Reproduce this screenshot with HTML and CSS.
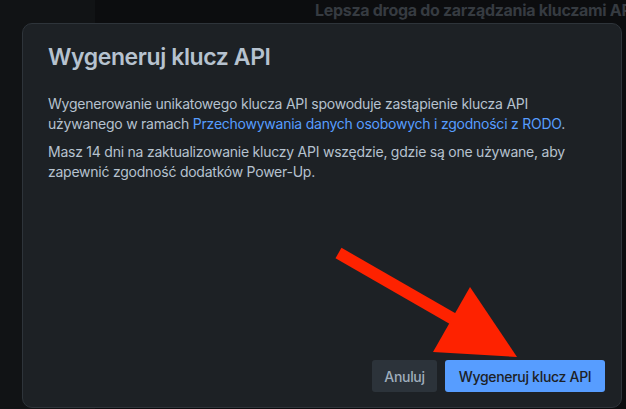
FILE: index.html
```html
<!DOCTYPE html>
<html lang="pl">
<head>
<meta charset="utf-8">
<link rel="stylesheet" href="styles.css">
</head>
<body>
<div class="page">
  <aside class="sidebar"></aside>
  <main class="main">
    <h2 class="bg-heading">Lepsza droga do zarządzania kluczami API</h2>
  </main>
</div>

<section class="modal">
  <h1 class="modal-title">Wygeneruj klucz API</h1>
  <div class="modal-body">
    <p>Wygenerowanie unikatowego klucza API spowoduje zastąpienie klucza API używanego w ramach <a href="#" class="link">Przechowywania danych osobowych i zgodności z RODO</a>.</p>
    <p>Masz 14 dni na zaktualizowanie kluczy API wszędzie, gdzie są one używane, aby zapewnić zgodność dodatków Power-Up.</p>
  </div>
  <div class="modal-footer">
    <button class="btn btn-subtle">Anuluj</button>
    <button class="btn btn-primary">Wygeneruj klucz API</button>
  </div>
</section>

<svg class="arrow" width="626" height="409" viewBox="0 0 626 409">
  <line x1="338.5" y1="253" x2="462" y2="324" stroke="#fe2200" stroke-width="12"/>
  <polygon points="470,287 433,352 517,357" fill="#fe2200"/>
</svg>
</body>
</html>
```
FILE: styles.css
```css
html, body {
  margin: 0;
  padding: 0;
  width: 626px;
  height: 409px;
  overflow: hidden;
  background: #0c0d0f;
  font-family: Inter, "Noto Sans", sans-serif;
}

.page {
  display: flex;
  height: 409px;
}

.sidebar {
  width: 95px;
  flex: none;
  background: #111315;
}

.main {
  flex: 1;
  padding-left: 220px;
  overflow: hidden;
}

.bg-heading {
  margin: 0;
  font-size: 16px;
  line-height: 20px;
  font-weight: 700;
  letter-spacing: -0.3px;
  color: #363b41;
  white-space: nowrap;
}

.modal {
  position: absolute;
  left: 22px;
  top: 23px;
  width: 600px;
  height: 385px;
  box-sizing: border-box;
  border: 1px solid #2e343a;
  border-radius: 10px;
  background: #1d2125;
  display: flex;
  flex-direction: column;
  padding: 18px 16px 15px 25px;
  color: #b6c2cf;
}

.modal-title {
  margin: 0;
  font-size: 23px;
  line-height: 30px;
  font-weight: 600;
  letter-spacing: -0.4px;
  color: #b6c2cf;
}

.modal-body {
  margin-top: 22px;
  flex: 1;
  max-width: 532px;
}

.modal-body p {
  margin: 0 0 8px;
  font-size: 14px;
  line-height: 20px;
  letter-spacing: -0.24px;
}

.link {
  color: #579dff;
  text-decoration: none;
}

.modal-footer {
  display: flex;
  justify-content: flex-end;
  gap: 8px;
}

.btn {
  height: 32px;
  border: none;
  border-radius: 3px;
  font-family: Inter, "Noto Sans", sans-serif;
  font-size: 14px;
  font-weight: 500;
  letter-spacing: -0.3px;
  padding: 0;
  white-space: nowrap;
}

.btn-subtle {
  background: #2c333a;
  color: #9fadbc;
  width: 65px;
}

.btn-primary {
  background: #579dff;
  color: #1d2125;
  width: 160px;
}

.arrow {
  position: absolute;
  left: 0;
  top: 0;
  pointer-events: none;
}
```
